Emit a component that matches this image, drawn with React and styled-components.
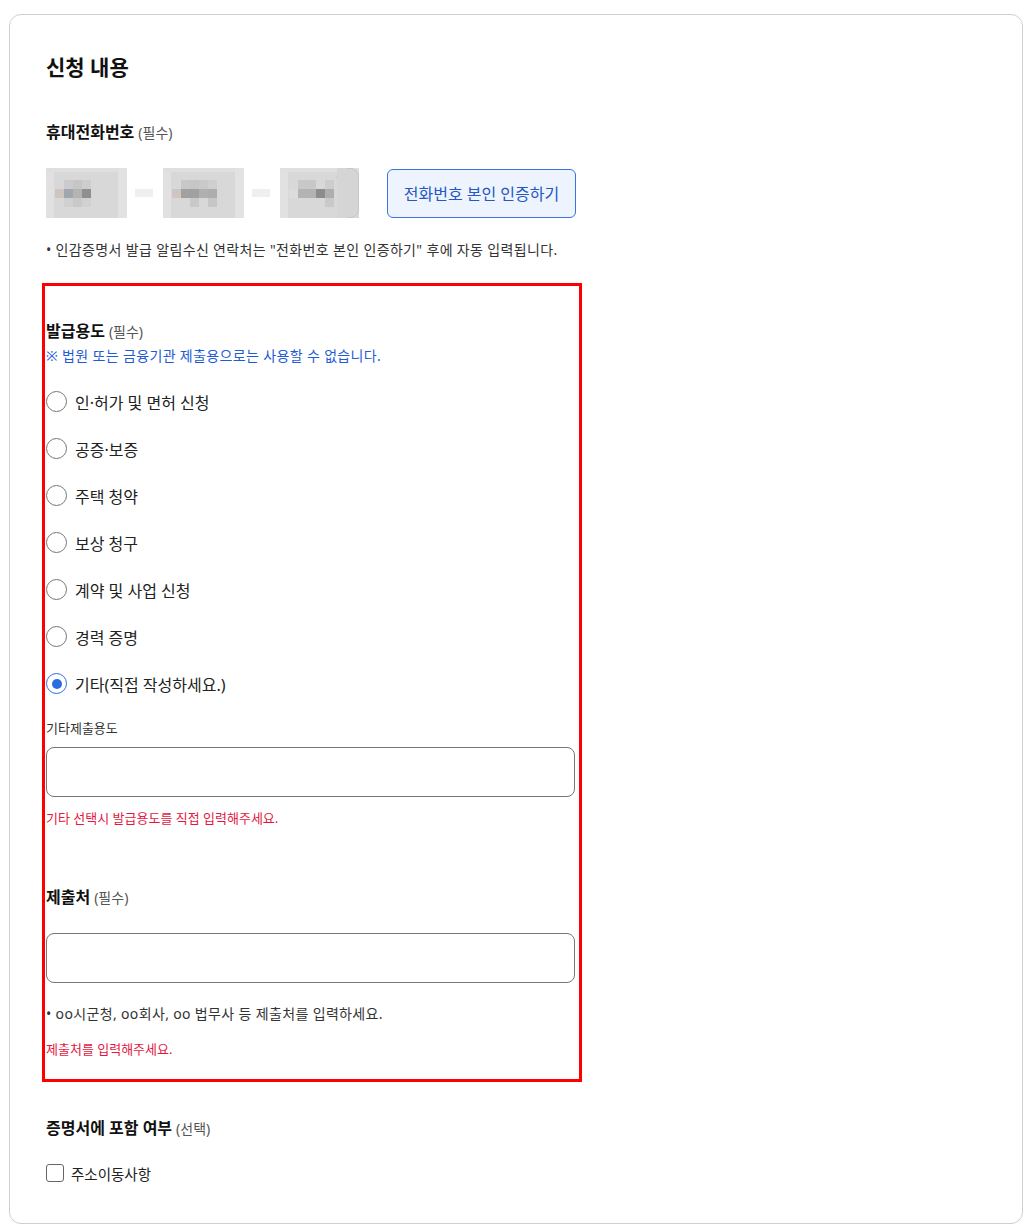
import React from 'react'
import styled, { createGlobalStyle } from 'styled-components'

const GlobalStyle = createGlobalStyle`
  html, body {
    margin: 0;
    padding: 0;
    background: #fff;
    font-family: "Noto Sans", "Noto Sans CJK KR", sans-serif;
    color: #222;
  }
  * { box-sizing: border-box; }
`

const Page = styled.div`
  padding: 14px 6px 8px 9px;
`

const Card = styled.section`
  border: 1px solid #cfcfcf;
  border-radius: 12px;
  padding: 37px 36px 38px 36px;
`

const Title = styled.h2`
  margin: 0;
  font-size: 21px;
  line-height: 30px;
  font-weight: 700;
  color: #111;
`

const Label = styled.div`
  margin-top: ${(p) => p.$mt || 0}px;
  font-size: 16px;
  line-height: 24px;
  font-weight: 700;
  color: #111;
`

const Hint = styled.span`
  font-size: 14px;
  font-weight: 400;
  color: #555;
  margin-left: 4px;
`

const PhoneRow = styled.div`
  display: flex;
  align-items: center;
  margin-top: 23px;
  height: 50px;
`

const MaskBox = styled.div`
  width: ${(p) => p.$w}px;
  height: 50px;
  margin-left: ${(p) => p.$ml || 0}px;
  display: flex;
`

const Dash = styled.div`
  width: 18px;
  height: 8px;
  margin-left: 8px;
  background: #efefef;
`

const VerifyButton = styled.button`
  margin-left: 28px;
  width: 189px;
  height: 49px;
  border: 1px solid #3a72e0;
  border-radius: 6px;
  background: #eef4fe;
  color: #2456c4;
  font-family: inherit;
  font-size: 16px;
  cursor: pointer;
`

const Note = styled.p`
  margin: ${(p) => p.$mt || 0}px 0 0;
  font-size: 14px;
  line-height: 20px;
  color: ${(p) => p.$color || '#333'};
  letter-spacing: 0.35px;
`

const Small = styled.p`
  margin: ${(p) => p.$mt || 0}px 0 0;
  font-size: 13px;
  line-height: 20px;
  color: ${(p) => p.$color || '#333'};
`

const Highlight = styled.div`
  margin: 23px 0 0 -4px;
  width: 540px;
  border: 3px solid #ff0000;
  padding: 33px 4px 20px 1px;
`

const RadioList = styled.div`
  margin-top: 12px;
  display: flex;
  flex-direction: column;
`

const RadioRow = styled.label`
  height: 47px;
  display: flex;
  align-items: center;
  gap: 8px;
  font-size: 16px;
  color: #222;
  cursor: pointer;
`

const RadioCircle = styled.span`
  width: 21px;
  height: 21px;
  border-radius: 50%;
  border: 1px solid ${(p) => (p.$on ? '#2a6de0' : '#767676')};
  display: flex;
  align-items: center;
  justify-content: center;
  flex: none;

  &::after {
    content: '';
    display: ${(p) => (p.$on ? 'block' : 'none')};
    width: 10px;
    height: 10px;
    border-radius: 50%;
    background: #2a6de0;
  }
`

const TextInput = styled.input`
  display: block;
  margin-top: ${(p) => p.$mt || 0}px;
  width: 529px;
  height: 50px;
  border: 1px solid #767676;
  border-radius: 8px;
  font-family: inherit;
  font-size: 15px;
  padding: 0 12px;
  outline: none;
`

const CheckRow = styled.label`
  margin-top: 20px;
  height: 24px;
  display: flex;
  align-items: center;
  gap: 7px;
  font-size: 14.5px;
  color: #222;
`

const CheckBox = styled.span`
  width: 18px;
  height: 18px;
  border: 1px solid #666;
  border-radius: 3px;
  flex: none;
`

const ERR = '#e5173f'

function Mosaic({ width, cells, tail }) {
  return (
    <svg width={width} height="50" shapeRendering="crispEdges">
      <rect x="0" y="0" width={width} height="50" fill="#d8d8d8" />
      <rect x="0" y="0" width="8" height="50" fill="#e1e1e1" />
      <rect x="0" y="0" width={width} height="4" fill="#dfdfdf" />
      {!tail && <rect x={width - 9} y="0" width="9" height="50" fill="#e2e2e2" />}
      {tail && (
        <rect x={width - 22} y="0.5" width="21.5" height="49" rx="8" fill="#d5d5d5" stroke="#c8c8c8" />
      )}
      {tail && <rect x={width - 22} y="0" width="10" height="50" fill="#d5d5d5" />}
      {cells.map((row, r) =>
        row.map((c, i) =>
          c ? <rect key={r + '-' + i} x={c[0]} y={12 + r * 9} width="9" height="9" fill={c[1]} /> : null
        )
      )}
    </svg>
  )
}

const phoneParts = [
  {
    w: 81,
    ml: 0,
    cells: [
      [null, [18, '#cbcbcb'], [27, '#c6c6c6'], [36, '#cdcdcd']],
      [[9, '#cfc4bf'], [18, '#a1a7b1'], [27, '#b4b4b4'], [36, '#8f8f8f']],
      [null, [18, '#d0d0d0'], [27, '#c9c9c9'], [36, '#d1d1d1']],
    ],
  },
  {
    w: 81,
    ml: 10,
    cells: [
      [[18, '#c8c8c8'], [27, '#c6c6c6'], [36, '#c9c9c9'], [45, '#cfcfcf']],
      [[9, '#cfc6c1'], [18, '#a1a1a1'], [27, '#a1a1a1'], [36, '#b0b0b0'], [45, '#adadad']],
      [null, [27, '#c9c9c9'], [45, '#c6c6c6']],
    ],
  },
  {
    w: 79,
    ml: 10,
    tail: true,
    cells: [
      [[18, '#c8c8c8'], [27, '#c8c8c8'], [45, '#cdcdcd']],
      [[9, '#dcdcdc'], [18, '#b3b3b3'], [27, '#b3b3b3'], [36, '#8c8c8c'], [45, '#aeaeae']],
      [[45, '#c9c9c9']],
    ],
  },
]

const purposes = [
  '인·허가 및 면허 신청',
  '공증·보증',
  '주택 청약',
  '보상 청구',
  '계약 및 사업 신청',
  '경력 증명',
  '기타(직접 작성하세요.)',
]

export default function App() {
  const selected = purposes.length - 1
  return (
    <>
      <GlobalStyle />
      <Page>
        <Card>
          <Title>신청 내용</Title>

          <Label $mt={38}>
            휴대전화번호<Hint>(필수)</Hint>
          </Label>
          <PhoneRow>
            {phoneParts.map((p, i) => (
              <React.Fragment key={i}>
                {i > 0 && <Dash />}
                <MaskBox $w={p.w} $ml={p.ml}>
                  <Mosaic width={p.w} cells={p.cells} tail={p.tail} />
                </MaskBox>
              </React.Fragment>
            ))}
            <VerifyButton type="button">전화번호 본인 인증하기</VerifyButton>
          </PhoneRow>
          <Note $mt={22}>• 인감증명서 발급 알림수신 연락처는 "전화번호 본인 인증하기" 후에 자동 입력됩니다.</Note>

          <Highlight>
            <Label>
              발급용도<Hint>(필수)</Hint>
            </Label>
            <Note $mt={2} $color="#1f5bd6">※ 법원 또는 금융기관 제출용으로는 사용할 수 없습니다.</Note>
            <RadioList>
              {purposes.map((p, i) => (
                <RadioRow key={p}>
                  <RadioCircle $on={i === selected} />
                  {p}
                </RadioRow>
              ))}
            </RadioList>
            <Small $mt={11}>기타제출용도</Small>
            <TextInput $mt={9} />
            <Small $mt={11} $color={ERR}>기타 선택시 발급용도를 직접 입력해주세요.</Small>

            <Label $mt={57}>
              제출처<Hint>(필수)</Hint>
            </Label>
            <TextInput $mt={23} />
            <Note $mt={21}>• oo시군청, oo회사, oo 법무사 등 제출처를 입력하세요.</Note>
            <Small $mt={15} $color={ERR}>제출처를 입력해주세요.</Small>
          </Highlight>

          <Label $mt={34}>
            증명서에 포함 여부<Hint>(선택)</Hint>
          </Label>
          <CheckRow>
            <CheckBox />
            주소이동사항
          </CheckRow>
        </Card>
      </Page>
    </>
  )
}
